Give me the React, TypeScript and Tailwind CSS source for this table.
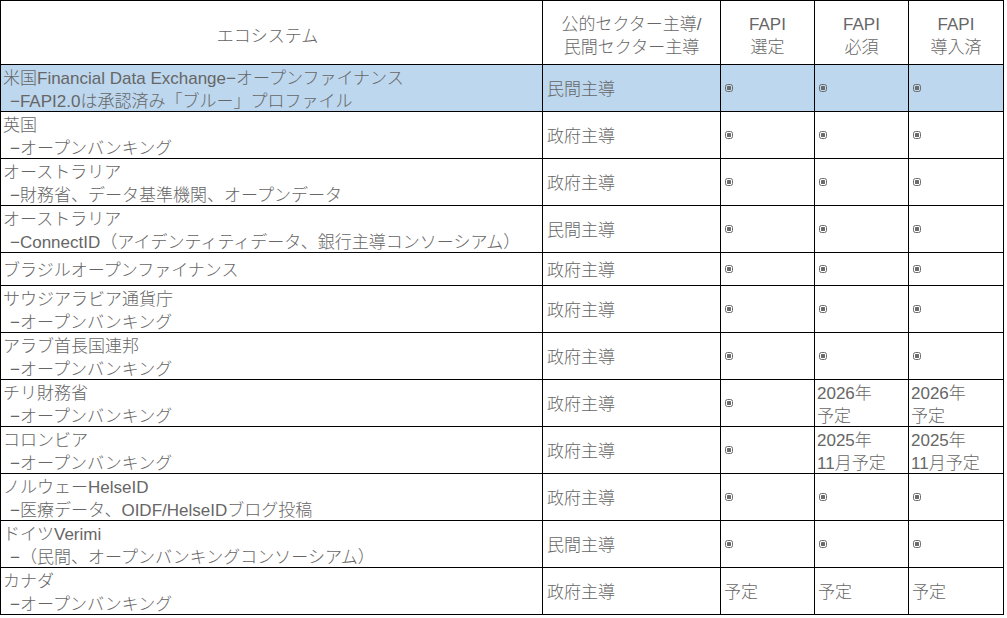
import React from "react";

type Val = "dot" | string[];

interface RowData {
  l1: string;
  l2?: string;
  lead: string;
  v: [Val, Val, Val];
  hl?: boolean;
}

const rows: RowData[] = [
  {
    l1: "米国Financial Data Exchange−オープンファイナンス",
    l2: "−FAPI2.0は承認済み「ブルー」プロファイル",
    lead: "民間主導",
    v: ["dot", "dot", "dot"],
    hl: true,
  },
  { l1: "英国", l2: "−オープンバンキング", lead: "政府主導", v: ["dot", "dot", "dot"] },
  { l1: "オーストラリア", l2: "−財務省、データ基準機関、オープンデータ", lead: "政府主導", v: ["dot", "dot", "dot"] },
  {
    l1: "オーストラリア",
    l2: "−ConnectID（アイデンティティデータ、銀行主導コンソーシアム）",
    lead: "民間主導",
    v: ["dot", "dot", "dot"],
  },
  { l1: "ブラジルオープンファイナンス", lead: "政府主導", v: ["dot", "dot", "dot"] },
  { l1: "サウジアラビア通貨庁", l2: "−オープンバンキング", lead: "政府主導", v: ["dot", "dot", "dot"] },
  { l1: "アラブ首長国連邦", l2: "−オープンバンキング", lead: "政府主導", v: ["dot", "dot", "dot"] },
  {
    l1: "チリ財務省",
    l2: "−オープンバンキング",
    lead: "政府主導",
    v: ["dot", ["2026年", "予定"], ["2026年", "予定"]],
  },
  {
    l1: "コロンビア",
    l2: "−オープンバンキング",
    lead: "政府主導",
    v: ["dot", ["2025年", "11月予定"], ["2025年", "11月予定"]],
  },
  { l1: "ノルウェーHelseID", l2: "−医療データ、OIDF/HelseIDブログ投稿", lead: "政府主導", v: ["dot", "dot", "dot"] },
  { l1: "ドイツVerimi", l2: "−（民間、オープンバンキングコンソーシアム）", lead: "民間主導", v: ["dot", "dot", "dot"] },
  { l1: "カナダ", l2: "−オープンバンキング", lead: "政府主導", v: [["予定"], ["予定"], ["予定"]] },
];

function Dot() {
  return (
    <svg width="8" height="8" viewBox="0 0 8 8" className="block">
      <rect x="0.5" y="0.5" width="7" height="7" rx="2" fill="none" stroke="#6b6b6b" strokeWidth="1" />
      <rect x="2" y="2" width="4" height="4" rx="0.5" fill="#6b6b6b" />
    </svg>
  );
}

const cellBase = "border-r border-b border-black overflow-hidden whitespace-nowrap";

function ValueCell({ v, bg }: { v: Val; bg: string }) {
  if (v === "dot") {
    return (
      <div className={`${cellBase} ${bg} flex items-center pl-[4px]`}>
        <Dot />
      </div>
    );
  }
  if (v.length === 1) {
    return (
      <div className={`${cellBase} ${bg} flex items-center pl-[3px] pt-[3px] leading-[23px]`}>{v[0]}</div>
    );
  }
  return (
    <div className={`${cellBase} ${bg} pl-[2px] pt-[2px] leading-[23px]`}>
      <div>{v[0]}</div>
      <div>{v[1]}</div>
    </div>
  );
}

export default function App() {
  return (
    <div className="w-[1007px] h-[618px] bg-white overflow-hidden">
      <div
        className="grid grid-cols-[542px_178px_94px_94px_95px] border-l border-t border-black w-[1004px] text-[17px] text-[#666666] font-light"
        style={{ fontFamily: '"Liberation Sans", "Noto Sans CJK JP", sans-serif' }}
      >
        {/* header */}
        <div className={`${cellBase} h-[64px] flex items-center justify-center pt-[8px] pr-[8px]`}>エコシステム</div>
        <div className={`${cellBase} h-[64px] flex flex-col items-center justify-center pt-[7px] leading-[23px]`}>
          <div>公的セクター主導/</div>
          <div>民間セクター主導</div>
        </div>
        <div className={`${cellBase} h-[64px] flex flex-col items-center justify-center pt-[7px] leading-[23px]`}>
          <div>FAPI</div>
          <div>選定</div>
        </div>
        <div className={`${cellBase} h-[64px] flex flex-col items-center justify-center pt-[7px] leading-[23px]`}>
          <div>FAPI</div>
          <div>必須</div>
        </div>
        <div className={`${cellBase} h-[64px] flex flex-col items-center justify-center pt-[7px] leading-[23px]`}>
          <div>FAPI</div>
          <div>導入済</div>
        </div>

        {rows.map((r, i) => {
          const h = r.l2 ? "h-[47px]" : "h-[33px]";
          const bg = r.hl ? "bg-[#bdd7ee]" : "bg-white";
          return (
            <React.Fragment key={i}>
              <div className={`${cellBase} ${h} ${bg} pl-[2px] leading-[23px] ${r.l2 ? "pt-[2px]" : "flex items-center pt-[3px]"}`}>
                <div>{r.l1}</div>
                {r.l2 && <div className="pl-[7px]">{r.l2}</div>}
              </div>
              <div className={`${cellBase} ${h} ${bg} flex items-center pl-[4px] pt-[3px]`}>{r.lead}</div>
              <ValueCell v={r.v[0]} bg={`${h} ${bg}`} />
              <ValueCell v={r.v[1]} bg={`${h} ${bg}`} />
              <ValueCell v={r.v[2]} bg={`${h} ${bg}`} />
            </React.Fragment>
          );
        })}
      </div>
    </div>
  );
}
